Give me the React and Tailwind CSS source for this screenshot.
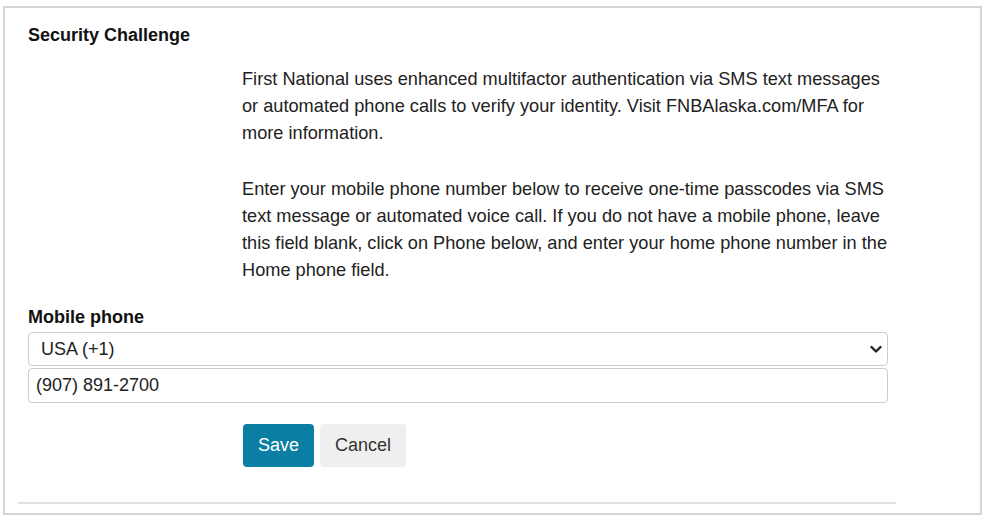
import React from "react";

export default function App() {
  return (
    <div className="w-[987px] h-[518px] bg-white pt-[6px] pl-[3px]" style={{ fontFamily: '"Liberation Sans", Arial, sans-serif' }}>
      <div className="w-[979px] h-[509px] border-2 border-[#d5d5d5] bg-white flex flex-col pl-[13px] pt-[16px] text-[#222]">
        <div className="pl-[10px] text-[18px] leading-[22px] font-bold text-[#111]">Security Challenge</div>
        <div className="pl-[224px] pt-[20px] w-[876px] text-[18.2px] leading-[27px]">
          <p>
            First National uses enhanced multifactor authentication via SMS text messages or automated phone calls to verify your identity. Visit FNBAlaska.com/MFA for more information.
          </p>
          <p className="mt-[29px]">
            Enter your mobile phone number below to receive one-time passcodes via SMS text message or automated voice call. If you do not have a mobile phone, leave this field blank, click on Phone below, and enter your home phone number in the Home phone field.
          </p>
        </div>
        <div className="pl-[10px] mt-[22px] text-[18px] leading-[22px] font-bold text-[#111]">Mobile phone</div>
        <div className="pl-[10px] mt-[4px] w-[870px] flex flex-col gap-[2px]">
          <div className="relative h-[34px] border border-[#cccccc] rounded-[4px] flex items-center pl-[12px] text-[18px] text-[#222]">
            USA (+1)
            <svg className="absolute right-[5px] top-[12px]" width="12" height="9" viewBox="0 0 12 9">
              <path d="M1.5 2 L6 6.5 L10.5 2" fill="none" stroke="#222" strokeWidth="2.4" strokeLinecap="round" strokeLinejoin="round" />
            </svg>
          </div>
          <div className="h-[35px] border border-[#cccccc] rounded-[4px] flex items-center pl-[7px] text-[18px] text-[#222]">
            (907) 891-2700
          </div>
        </div>
        <div className="pl-[225px] mt-[21px] flex gap-[6px]">
          <button className="w-[71px] h-[43px] rounded-[4px] bg-[#0a7fa3] text-white text-[18px]">Save</button>
          <button className="w-[86px] h-[43px] rounded-[4px] bg-[#efefef] text-[#333] text-[18px]">Cancel</button>
        </div>
        <div className="mt-auto mb-[9px] w-[878px] h-[2px] bg-[#e2e2e2]"></div>
      </div>
    </div>
  );
}
